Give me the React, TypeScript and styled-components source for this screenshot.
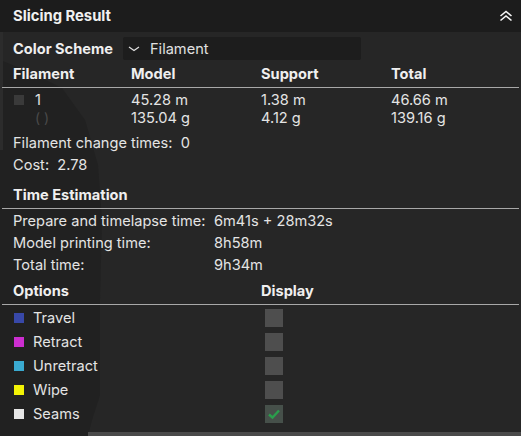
import React from "react";
import styled, { createGlobalStyle } from "styled-components";

const Global = createGlobalStyle`
  html, body { margin: 0; padding: 0; background: #262626; }
  body { font-family: Inter, "Noto Sans", sans-serif; color: #e4e4e4; }
`;

const Panel = styled.div`
  position: relative;
  width: 521px;
  height: 436px;
  background: #262626;
  overflow: hidden;
  font-size: 14.6px;
`;

const Backdrop = styled.svg`
  position: absolute;
  left: 0;
  top: 0;
  width: 521px;
  height: 436px;
  pointer-events: none;
`;

const Content = styled.div`
  position: relative;
  display: flex;
  flex-direction: column;
`;

const Header = styled.div`
  height: 32px;
  background: #1c1c1c;
  display: flex;
  align-items: center;
  justify-content: space-between;
  padding: 0 8px 0 13px;
`;

const Title = styled.div`
  font-weight: 700;
  font-size: 14.8px;
  color: #f0f0f0;
`;

const SchemeRow = styled.div`
  display: flex;
  align-items: center;
  margin-top: 5px;
  height: 23px;
  padding-left: 13px;
`;

const Bold = styled.div`
  font-weight: 700;
  color: #efefef;
`;

const Select = styled.div`
  margin-left: 10px;
  width: 238px;
  height: 23px;
  background: #1d1d1d;
  border-radius: 2px;
  display: flex;
  align-items: center;
  gap: 10px;
  padding-left: 5px;
  box-sizing: border-box;
  color: #e0e0e0;
`;

const SectionHead = styled.div<{ $cols: string }>`
  display: grid;
  grid-template-columns: ${(p) => p.$cols};
  align-items: center;
  height: 26px;
  padding-left: 11px;
  margin: 0 2px;
  border-bottom: 1px solid #a8a8a8;
  font-weight: 700;
  color: #efefef;
`;

const FilHead = styled(SectionHead)`
  margin-top: 1px;
`;

const DataGrid = styled.div`
  display: grid;
  grid-template-columns: 118px 130px 130px 1fr;
  padding: 3px 0 0 13px;
  line-height: 18px;
`;

const FilCell = styled.div`
  display: flex;
  flex-direction: column;
`;

const FilTop = styled.div`
  display: flex;
  align-items: center;
  gap: 11px;
  padding-left: 1px;
`;

const Swatch = styled.span<{ $c: string }>`
  display: inline-block;
  width: 10px;
  height: 10px;
  background: ${(p) => p.$c};
`;

const Faint = styled.div`
  color: #4a4a4a;
  padding-left: 22px;
  font-size: 14px;
`;

const Stack = styled.div`
  display: flex;
  flex-direction: column;
`;

const InfoLine = styled.div`
  height: 22px;
  line-height: 22px;
  padding-left: 13px;
  white-space: pre;
`;

const Info = styled.div`
  margin-top: 5px;
  display: flex;
  flex-direction: column;
`;

const TimeHead = styled(SectionHead)`
  margin-top: 6px;
`;

const TimeList = styled.div`
  margin-top: 1px;
  display: flex;
  flex-direction: column;
`;

const TimeRow = styled.div`
  display: grid;
  grid-template-columns: 201px 1fr;
  height: 22px;
  line-height: 22px;
  padding-left: 13px;
`;

const OptHead = styled(SectionHead)`
  margin-top: 2px;
`;

const OptList = styled.div`
  margin-top: 1px;
  display: flex;
  flex-direction: column;
`;

const OptRow = styled.div`
  display: grid;
  grid-template-columns: 251px 1fr;
  height: 24px;
  align-items: center;
  padding-left: 14px;
`;

const OptName = styled.div`
  display: flex;
  align-items: center;
  gap: 9px;
`;

const Check = styled.div<{ $on?: boolean }>`
  width: 18px;
  height: 18px;
  background: ${(p) => (p.$on ? "#46504a" : "#4e4e4e")};
  display: flex;
  align-items: center;
  justify-content: center;
`;

const Strip = styled.div`
  position: absolute;
  left: 88px;
  right: 0;
  bottom: 0;
  height: 4px;
  background: #4a4a4a;
`;

const options = [
  { name: "Travel", c: "#3848a8" },
  { name: "Retract", c: "#cc2ed0" },
  { name: "Unretract", c: "#3aaad0" },
  { name: "Wipe", c: "#f2f205" },
  { name: "Seams", c: "#e6e6e6", on: true },
];

export default function App() {
  return (
    <>
      <Global />
      <Panel>
        <Backdrop viewBox="0 0 521 436">
          <path
            d="M0 60 L0 436 L88 436 L92 420 L100 395 L100 300 L102 220 L98 165 L85 120 L62 88 L30 72 Z"
            fill="#212121"
          />
          <path d="M0 32 L3 32 L3 150 L0 150 Z" fill="#2c2c2c" />
        </Backdrop>
        <Content>
          <Header>
            <Title>Slicing Result</Title>
            <svg width="14" height="12" viewBox="0 0 14 12">
              <path d="M1.5 6 L7 1.5 L12.5 6" fill="none" stroke="#f4f4f4" strokeWidth="1.6" />
              <path d="M1.5 10.5 L7 6 L12.5 10.5" fill="none" stroke="#f4f4f4" strokeWidth="1.6" />
            </svg>
          </Header>
          <SchemeRow>
            <Bold>Color Scheme</Bold>
            <Select>
              <svg width="12" height="6" viewBox="0 0 12 6">
                <path d="M1 1 L6 4.5 L11 1" fill="none" stroke="#e0e0e0" strokeWidth="1.2" />
              </svg>
              Filament
            </Select>
          </SchemeRow>
          <FilHead $cols="118px 130px 130px 1fr">
            <div>Filament</div>
            <div>Model</div>
            <div>Support</div>
            <div>Total</div>
          </FilHead>
          <DataGrid>
            <FilCell>
              <FilTop>
                <Swatch $c="#3a3a3a" />
                <span>1</span>
              </FilTop>
              <Faint>( )</Faint>
            </FilCell>
            <Stack>
              <div>45.28 m</div>
              <div>135.04 g</div>
            </Stack>
            <Stack>
              <div>1.38 m</div>
              <div>4.12 g</div>
            </Stack>
            <Stack>
              <div>46.66 m</div>
              <div>139.16 g</div>
            </Stack>
          </DataGrid>
          <Info>
            <InfoLine>Filament change times:  0</InfoLine>
            <InfoLine>Cost:  2.78</InfoLine>
          </Info>
          <TimeHead $cols="1fr">
            <div>Time Estimation</div>
          </TimeHead>
          <TimeList>
            <TimeRow>
              <div>Prepare and timelapse time:</div>
              <div>6m41s + 28m32s</div>
            </TimeRow>
            <TimeRow>
              <div>Model printing time:</div>
              <div>8h58m</div>
            </TimeRow>
            <TimeRow>
              <div>Total time:</div>
              <div>9h34m</div>
            </TimeRow>
          </TimeList>
          <OptHead $cols="248px 1fr">
            <div>Options</div>
            <div>Display</div>
          </OptHead>
          <OptList>
            {options.map((o) => (
              <OptRow key={o.name}>
                <OptName>
                  <Swatch $c={o.c} />
                  <span>{o.name}</span>
                </OptName>
                <Check $on={o.on}>
                  {o.on && (
                    <svg width="14" height="12" viewBox="0 0 14 12">
                      <path d="M2 6.5 L5.5 9.5 L12 2.5" fill="none" stroke="#2a9e4c" strokeWidth="2.4" />
                    </svg>
                  )}
                </Check>
              </OptRow>
            ))}
          </OptList>
        </Content>
        <Strip />
      </Panel>
    </>
  );
}
